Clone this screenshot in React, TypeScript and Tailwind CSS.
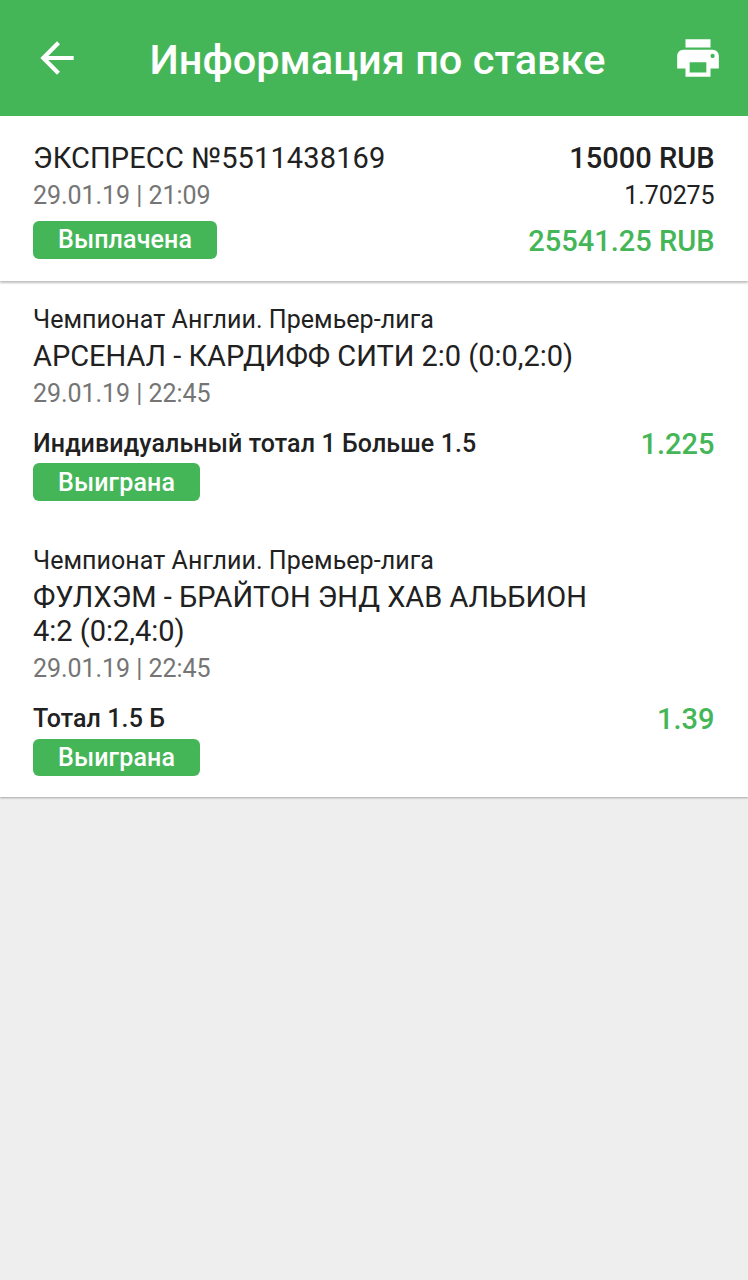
import { MdArrowBack, MdPrint } from 'react-icons/md'

type BetEvent = {
  league: string
  match: string
  date: string
  market: string
  odds: string
  status: string
}

const events: BetEvent[] = [
  {
    league: 'Чемпионат Англии. Премьер-лига',
    match: 'АРСЕНАЛ - КАРДИФФ СИТИ 2:0 (0:0,2:0)',
    date: '29.01.19 | 22:45',
    market: 'Индивидуальный тотал 1 Больше 1.5',
    odds: '1.225',
    status: 'Выиграна',
  },
  {
    league: 'Чемпионат Англии. Премьер-лига',
    match: 'ФУЛХЭМ - БРАЙТОН ЭНД ХАВ АЛЬБИОН 4:2 (0:2,4:0)',
    date: '29.01.19 | 22:45',
    market: 'Тотал 1.5 Б',
    odds: '1.39',
    status: 'Выиграна',
  },
]

function StatusBadge({ label }: { label: string }) {
  return (
    <span className="inline-flex h-[37.5px] items-center rounded-[6px] bg-[#45b658] px-[25px] text-[25px] leading-none font-medium tracking-[0.14px] text-white">
      {label}
    </span>
  )
}

function HeaderBar() {
  return (
    <header className="flex h-[116px] items-center justify-between bg-[#45b658] pr-[25px] pl-[32px] text-white">
      <button type="button" aria-label="Назад">
        <MdArrowBack size={50} />
      </button>
      <h1 className="pt-1 text-[41.5px] leading-[50px] font-medium whitespace-nowrap">Информация по ставке</h1>
      <button type="button" aria-label="Печать">
        <MdPrint size={50} />
      </button>
    </header>
  )
}

function Summary() {
  return (
    <section className="flex h-[165px] justify-between bg-white pr-[33.5px] pl-[33px] pt-[25px] shadow-[0_2px_2px_rgba(0,0,0,0.25)]">
      <div className="flex flex-col items-start">
        <p className="text-[29px] leading-[34px] tracking-[0.13px]">ЭКСПРЕСС №5511438169</p>
        <p className="mt-[6px] text-[25px] leading-[30px] tracking-[-0.05px] text-[#757575]">29.01.19 | 21:09</p>
        <div className="mt-[10px] flex">
          <StatusBadge label="Выплачена" />
        </div>
      </div>
      <div className="flex flex-col items-end">
        <p className="text-[29px] leading-[34px] font-medium">15000 RUB</p>
        <p className="mt-[6px] text-[25px] leading-[30px] tracking-[-0.1px]">1.70275</p>
        <p className="mt-[13px] text-[29px] leading-[34px] font-medium text-[#45b658]">25541.25 RUB</p>
      </div>
    </section>
  )
}

function EventCard({ event }: { event: BetEvent }) {
  return (
    <article className="pb-[45.5px]">
      <p className="text-[25px] leading-[30px] tracking-[0.05px]">{event.league}</p>
      <p className="mt-1 w-[600px] text-[29px] leading-[34px] tracking-[-0.02px]">{event.match}</p>
      <p className="mt-[6px] text-[25px] leading-[30px] tracking-[-0.05px] text-[#757575]">{event.date}</p>
      <div className="mt-4 flex h-[37px] items-center justify-between font-medium">
        <p className="text-[25px] leading-[30px] tracking-[0.11px]">{event.market}</p>
        <p className="text-[29px] leading-[34px] text-[#45b658]">{event.odds}</p>
      </div>
      <div className="mt-[1.4px] flex">
        <StatusBadge label={event.status} />
      </div>
    </article>
  )
}

export default function App() {
  return (
    <div className="min-h-screen bg-[#eeeeee] font-[Roboto,sans-serif] text-[#212121]">
      <HeaderBar />
      {/* the summary casts its shadow over the list below */}
      <div className="relative z-10">
        <Summary />
      </div>
      <main className="h-[516px] bg-white pr-[33.5px] pl-[33px] pt-[24px] shadow-[0_1px_2px_rgba(0,0,0,0.3)]">
        {events.map((event) => (
          <EventCard key={event.match} event={event} />
        ))}
      </main>
    </div>
  )
}
